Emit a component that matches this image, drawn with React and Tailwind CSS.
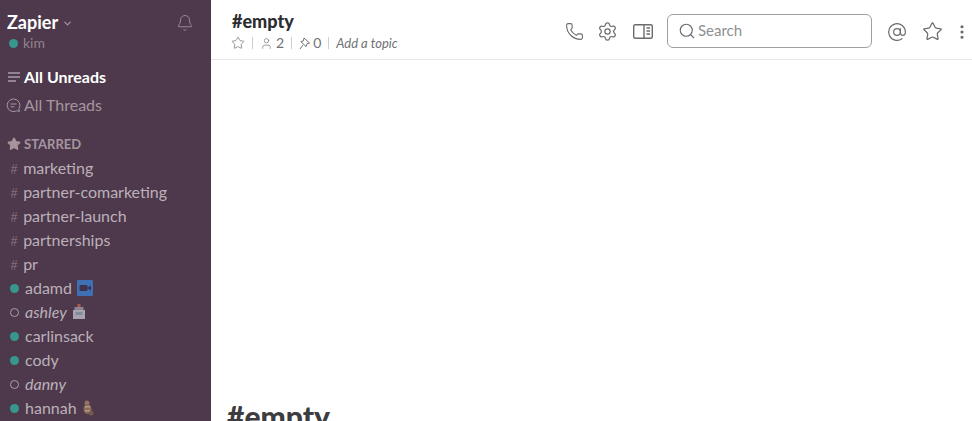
import React from "react";
import { AtSign, Bell, ChevronDown, MoreVertical, Phone, Search, Settings, Star, User } from "lucide-react";

const channels = ["marketing", "partner-comarketing", "partner-launch", "partnerships", "pr"];

const VideoEmoji = () => (
  <svg width="16" height="16" viewBox="0 0 16 16" className="shrink-0">
    <rect width="16" height="16" rx="1" fill="#3f6fb5" />
    <rect x="2.5" y="5" width="8" height="6" rx="1" fill="#3c3350" />
    <path d="M10.5 7.5 14 5.5v5l-3.5-2z" fill="#3c3350" />
  </svg>
);

const MailboxEmoji = () => (
  <svg width="14" height="16" viewBox="0 0 14 16" className="shrink-0">
    <rect x="5.5" y="0" width="3" height="4" fill="#a8604a" />
    <rect x="2.5" y="3" width="9" height="4" fill="#8e8494" />
    <rect x="1" y="6" width="12" height="9" fill="#a9a3b0" />
    <rect x="3.5" y="8" width="7" height="3" fill="#7f8ca0" />
  </svg>
);

const BeaverEmoji = () => (
  <svg width="12" height="16" viewBox="0 0 12 16" className="shrink-0">
    <circle cx="5" cy="3" r="2.5" fill="#96735f" />
    <ellipse cx="5.5" cy="9" rx="4" ry="5" fill="#8a6a58" />
    <ellipse cx="9" cy="13" rx="2.5" ry="2.5" fill="#75584f" />
    <rect x="3" y="6" width="5" height="1.5" fill="#b39a86" />
    <rect x="3" y="10" width="5" height="1.5" fill="#b39a86" />
  </svg>
);

const DirectMessage = ({ name, online, emoji }) => (
  <div className="flex h-6 items-center pl-[10px]">
    {online ? (
      <span className="h-[9px] w-[9px] shrink-0 rounded-full bg-[#38978d]" />
    ) : (
      <span className="h-[9px] w-[9px] shrink-0 rounded-full border border-[#ab9ba9]" />
    )}
    <span className={online ? "ml-[6px] text-[#bcb0ba]" : "ml-[6px] italic text-[#bcb0ba]"}>{name}</span>
    {emoji && <span className="ml-[5px] flex items-center">{emoji}</span>}
  </div>
);

const Sidebar = () => (
  <div className="h-[421px] w-[211px] shrink-0 overflow-hidden bg-[#4d394b] text-[16px]">
    <div className="flex items-start justify-between pl-[7px] pr-[17px] pt-[11px]">
      <div>
        <div className="flex h-[22px] items-center text-[18px] font-bold leading-[22px] text-white">
          Zapier
          <ChevronDown size={11} strokeWidth={2.25} className="ml-[4px] mt-[2px] text-[#ab9ba9]" />
        </div>
        <div className="mt-[1px] flex h-[18px] items-center pl-[2px] text-[14px] leading-[18px] text-[#93838f]">
          <span className="h-[9px] w-[9px] rounded-full bg-[#38978d]" />
          <span className="ml-[5px]">kim</span>
        </div>
      </div>
      <Bell size={18} strokeWidth={1.25} className="mt-[3px] text-[#9c8c9a]" />
    </div>

    <div className="mt-[11px] flex h-7 items-center pl-[7px] font-bold leading-7 text-white">
      <svg width="14" height="12" viewBox="0 0 14 12" className="mr-[3px] shrink-0 text-[#d8d2d7]" stroke="currentColor" strokeWidth="1.2">
        <path d="M1 2h12M1 6h12M1 10h8" />
      </svg>
      All Unreads
    </div>
    <div className="flex h-7 items-center pl-[6px] leading-7 text-[#a5959f]">
      <svg width="15" height="15" viewBox="0 0 15 15" fill="none" className="mr-[3px] shrink-0" stroke="currentColor" strokeWidth="1">
        <path d="M7.5 1a6.3 6.3 0 1 0 3.2 11.7l2.8.8-.7-2.6A6.3 6.3 0 0 0 7.5 1z" />
        <path d="M4.5 6h6M4.5 8.8h4" />
      </svg>
      All Threads
    </div>

    <div className="mt-[16px] flex h-[20px] items-center pl-[7px] text-[13px] font-bold text-[#a5959f]">
      <Star size={14} fill="currentColor" className="-mt-[2px] mr-[3px] shrink-0" />
      STARRED
    </div>
    <div className="mt-[1px]">
      {channels.map((c) => (
        <div key={c} className="flex h-6 items-center pl-[10px] text-[#bcb0ba]">
          <span className="mr-[5px] text-[14px] font-light text-[#8d7c8b]">#</span>
          {c}
        </div>
      ))}
      <DirectMessage name="adamd" online emoji={<VideoEmoji />} />
      <DirectMessage name="ashley" emoji={<MailboxEmoji />} />
      <DirectMessage name="carlinsack" online />
      <DirectMessage name="cody" online />
      <DirectMessage name="danny" />
      <DirectMessage name="hannah" online emoji={<BeaverEmoji />} />
    </div>
  </div>
);

const Divider = () => <span className="mx-[7px] h-3 w-px bg-[#cfcfcf]" />;

const Header = () => (
  <div className="flex h-[60px] shrink-0 items-center border-b border-[#e8e8e8] pl-[21px] pt-[2px] text-[#6a6b6d]">
    <div>
      <div className="text-[18px] font-black leading-[22px] text-[#2c2d30]">#empty</div>
      <div className="mt-[3px] flex h-[16px] items-center text-[14px] leading-[16px] text-[#717274]">
        <Star size={14} strokeWidth={1.25} className="-ml-[1px]" />
        <Divider />
        <User size={13} strokeWidth={1.25} />
        <span className="ml-[3px]">2</span>
        <Divider />
        <svg width="12" height="13" viewBox="0 0 12 13" fill="none" stroke="currentColor" strokeWidth="1">
          <path d="M5 1l5.5 5-2.4.6-1 3L1.8 4.6l2.6-.7zM4 8l-3 4" />
        </svg>
        <span className="ml-[2px]">0</span>
        <Divider />
        <span className="text-[13px] italic">Add a topic</span>
      </div>
    </div>
    <div className="ml-auto flex items-center">
      <Phone size={19} strokeWidth={1.4} className="mt-[2px]" />
      <Settings size={21} strokeWidth={1.4} className="ml-[13px] mt-[2px]" />
      <svg width="20" height="15" viewBox="0 0 20 15" fill="none" stroke="currentColor" strokeWidth="1.4" className="ml-[15px] mt-[2px]">
        <rect x="0.7" y="0.7" width="18.6" height="13.6" rx="1.5" />
        <path d="M11 .7v13.6" />
        <path d="M13.5 4h3.5M13.5 7h3.5M13.5 10h3.5" />
      </svg>
      <div className="ml-[14px] flex h-[34px] w-[205px] items-center rounded-[6px] border border-[#a0a0a2] pl-[10px] text-[15px] text-[#8f9092]">
        <Search size={18} strokeWidth={1.5} className="text-[#6a6b6d]" />
        <span className="ml-[2px]">Search</span>
      </div>
      <AtSign size={20} strokeWidth={1.4} className="ml-[15px] mt-[2px]" />
      <Star size={21} strokeWidth={1.4} className="ml-[15px] mt-[2px]" />
      <MoreVertical size={18} strokeWidth={2.25} className="ml-[10px] mr-[1px] mt-[2px] shrink-0" />
    </div>
  </div>
);

export default function App() {
  return (
    <div className="flex h-[421px] w-[972px] overflow-hidden bg-white font-['Lato','Open_Sans',sans-serif]">
      <Sidebar />
      <div className="flex min-w-0 flex-1 flex-col overflow-hidden">
        <Header />
        <div className="flex-1 overflow-hidden pl-[16px] pt-[338px]">
          <div className="text-[30px] font-black leading-9 text-[#3d3c40]">#empty</div>
        </div>
      </div>
    </div>
  );
}
